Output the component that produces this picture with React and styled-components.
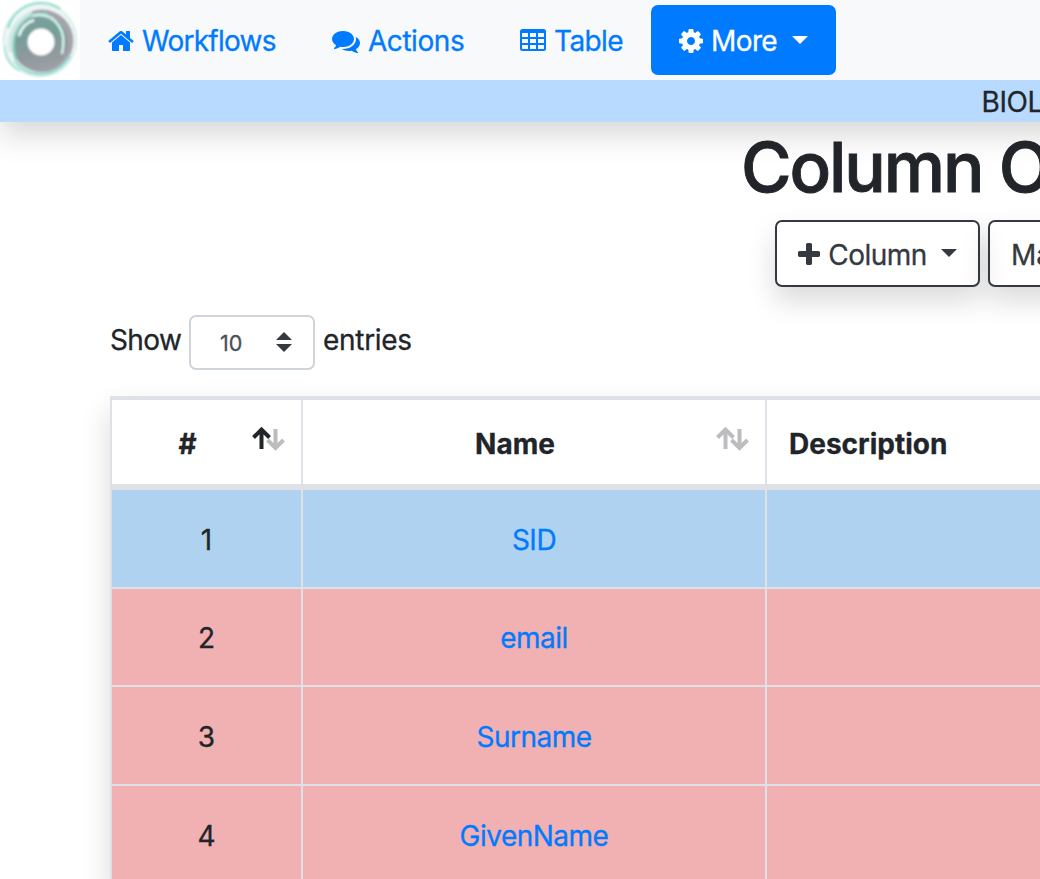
import React from 'react';
import styled, { createGlobalStyle } from 'styled-components';

const Global = createGlobalStyle`
  *, *::before, *::after { box-sizing: border-box; }
  html, body { margin: 0; padding: 0; overflow: hidden; background: #fff; }
  body {
    font: 400 28px/42px Inter, "Liberation Sans", sans-serif;
    color: #212529;
    -webkit-text-stroke: 0.3px currentColor;
  }
`;

const SHADOW = '0 14px 28px rgba(0, 0, 0, 0.15)';

const Page = styled.div`
  width: 1040px;
  height: 879px;
  overflow: hidden;
`;

const Header = styled.header`
  width: 1400px;
  box-shadow: ${SHADOW};
`;

const Navbar = styled.nav`
  display: flex;
  align-items: center;
  height: 80px;
  background: #f8f9fa;
`;

const Logo = styled.svg`
  display: block;
  flex: none;
  width: 80px;
  height: 80px;
  background: #fff;
`;

const NavItem = styled.a`
  display: flex;
  align-items: center;
  flex: none;
  height: 70px;
  padding: 2px 28px 0;
  border-radius: 7px;
  color: ${(p) => (p.$active ? '#fff' : '#007bff')};
  background: ${(p) => (p.$active ? '#007bff' : 'transparent')};
  white-space: nowrap;
`;

const Label = styled.span`
  display: block;
  width: ${(p) => p.$w}px;
  margin-left: 8px;
  letter-spacing: ${(p) => p.$ls || 0}px;
  white-space: nowrap;
`;

const Glyph = styled.svg`
  display: block;
  flex: none;
  height: 28px;
  width: ${(p) => p.$w}px;
  fill: currentColor;
`;

const Caret = styled.span`
  width: 0;
  height: 0;
  margin: -3px 0 0 ${(p) => p.$gap}px;
  border: solid transparent;
  border-width: 8.4px 8.4px 0;
  border-top-color: currentColor;
`;

const Crumb = styled.div`
  height: 42px;
  padding-left: 981.5px;
  padding-top: 1px;
  background: #b8daff;
  letter-spacing: -0.4px;
  white-space: nowrap;
`;

const Title = styled.h1`
  margin: 3px 0 0;
  padding-left: 741px;
  font-size: 69px;
  line-height: 84px;
  font-weight: 500;
  letter-spacing: -2.1px;
  -webkit-text-stroke: 0.9px currentColor;
  white-space: nowrap;
`;

const Toolbar = styled.div`
  display: flex;
  gap: 8px;
  margin: 11px 0 0 775px;
`;

const Button = styled.button`
  display: flex;
  align-items: center;
  flex: none;
  width: ${(p) => p.$w}px;
  height: 67px;
  padding: 2px 21px 0;
  border: 2px solid #343a40;
  border-radius: 7px;
  background: transparent;
  color: #343a40;
  font: inherit;
  box-shadow: ${SHADOW};
`;

const Length = styled.label`
  display: flex;
  align-items: center;
  height: 55px;
  margin: 28px 0 0 110px;
`;

const LengthText = styled.span`
  width: ${(p) => p.$w}px;
  margin-top: -5px;
  letter-spacing: ${(p) => p.$ls}px;
  white-space: nowrap;
`;

const Select = styled.span`
  display: flex;
  align-items: center;
  justify-content: space-between;
  width: 126px;
  height: 55px;
  margin-right: 8px;
  padding: 0 21px 0 29px;
  border: 2px solid #ced4da;
  border-radius: 7px;
  font-size: 21.5px;
  color: #495057;
`;

const SelectArrows = styled.svg`
  display: block;
  width: 16px;
  height: 20px;
  margin-top: -2px;
  fill: #343a40;
`;

const Grid = styled.div`
  display: grid;
  grid-template-columns: 189px 462px 600px;
  column-gap: 2px;
  width: 1400px;
  margin: 26px 0 0 110px;
  padding: 4px 0 0 2px;
  background: #dee2e6;
  box-shadow: ${SHADOW};
`;

const Cell = styled.div`
  display: flex;
  align-items: center;
  justify-content: center;
  height: ${(p) => p.$h}px;
  margin-bottom: 2px;
  padding-top: 2px;
  background: ${(p) => (p.$key ? '#afd2f0' : '#f1b0b1')};
  color: ${(p) => (p.$link ? '#007bff' : 'inherit')};
  letter-spacing: ${(p) => (p.$link ? -0.5 : 0)}px;
`;

const HeadCell = styled.div`
  display: flex;
  align-items: center;
  height: 84px;
  margin-bottom: 6px;
  padding: 3px 16px 0 22px;
  background: #fff;
  font-weight: 700;
`;

const HeadText = styled.span`
  flex: 1;
  padding-right: ${(p) => (p.$align ? 0 : 10)}px;
  text-align: ${(p) => p.$align || 'center'};
`;

const SortIcon = styled.svg`
  display: block;
  flex: none;
  width: 34px;
  height: 26px;
  margin-top: -9px;
  fill: none;
  stroke-width: 4;
`;

const Home = () => (
  <Glyph $w={26} viewBox="64 0 1664 1792">
    <path d="M1472 992v480q0 26-19 45t-45 19h-384v-384h-256v384h-384q-26 0-45-19t-19-45v-480q0-1 .5-3t.5-3l575-474 575 474q1 2 1 6zm223-69l-62 74q-8 9-21 11h-3q-13 0-21-7l-692-577-692 577q-12 8-24 7-13-2-21-11l-62-74q-8-10-7-23.5t11-21.5l719-599q32-26 76-26t76 26l244 204v-195q0-14 9-23t23-9h192q14 0 23 9t9 23v408l219 182q10 8 11 21.5t-7 23.5z" />
  </Glyph>
);

const Comments = () => (
  <Glyph $w={28} viewBox="0 0 1792 1792">
    <path d="M1408 768q0 139-94 257t-256.5 186.5-353.5 68.5q-86 0-176-16-124 88-278 128-36 9-86 16h-3q-11 0-20.5-8t-11.5-21q-1-3-1-6.5t.5-6.5 2-6l2.5-5 3.5-5.5 4-5 4.5-5 4-4.5q5-6 23-25t26-29.5 22.5-29 25-38.5 20.5-44q-124-72-195-177t-71-224q0-139 94-257t256.5-186.5 353.5-68.5 353.5 68.5 256.5 186.5 94 257zm384 256q0 120-71 224.5t-195 176.5q10 24 20.5 44t25 38.5 22.5 29 26 29.5 23 25q1 1 4 4.5t4.5 5 4 5 3.5 5.5l2.5 5 2 6 .5 6.5-1 6.5q-3 14-13 22t-22 7q-50-7-86-16-154-40-278-128-90 16-176 16-271 0-472-132 58 4 88 4 161 0 309-45t264-129q125-92 192-212t67-254q0-77-23-152 129 71 204 178t75 230z" />
  </Glyph>
);

const TableGlyph = () => (
  <Glyph $w={26} viewBox="0 1 26 28">
    <path
      fillRule="evenodd"
      d="M2.500 3h21A2.500 2.500 0 0 1 26 5.500v17a2.500 2.500 0 0 1-2.500 2.500h-21A2.500 2.500 0 0 1 0 22.500v-17A2.500 2.500 0 0 1 2.500 3z
      M2.500 7L2 7.500V11h6V7zM10 7v4h6v-4zM18 7v4h6V7.500L23.500 7z
      M2 13v4h6v-4zM10 13v4h6v-4zM18 13v4h6v-4z
      M2 19v3.500l.5.500h5.500v-4zM10 19v4h6v-4zM18 19v4h5.500l.5-.5v-3.500z"
    />
  </Glyph>
);

const Cog = () => (
  <Glyph $w={24} viewBox="128 0 1536 1792">
    <path d="M1152 896q0-106-75-181t-181-75-181 75-75 181 75 181 181 75 181-75 75-181zm512-109v222q0 12-8 23t-20 13l-185 28q-19 54-39 91 35 50 107 138 10 12 10 25t-9 23q-27 37-99 108t-94 71q-12 0-26-9l-138-108q-44 23-91 38-16 136-29 186-7 28-36 28h-222q-14 0-24.5-8.5t-11.5-21.5l-28-184q-49-16-90-37l-141 107q-10 9-25 9-14 0-25-11-126-114-165-168-7-10-7-23 0-12 8-23 15-21 51-66.5t54-70.500q-27-50-41-99l-183-27q-13-2-21-12.500t-8-23.500v-222q0-12 8-23t19-13l186-28q14-46 39-92-40-57-107-138-10-12-10-24 0-10 9-23 26-36 98.500-107.500t94.500-71.500q13 0 26 10l138 107q44-23 91-38 16-136 29-186 7-28 36-28h222q14 0 24.500 8.500t11.500 21.500l28 184q49 16 90 37l142-107q9-9 24-9 13 0 25 10 129 119 165 170 7 8 7 22 0 12-8 23-15 21-51 66.500t-54 70.500q26 50 41 98l183 28q13 2 21 12.500t8 23.500z" />
  </Glyph>
);

const Plus = () => (
  <Glyph $w={22} viewBox="192 0 1408 1792">
    <path d="M1600 736v192q0 40-28 68t-68 28h-416v416q0 40-28 68t-68 28h-192q-40 0-68-28t-28-68v-416h-416q-40 0-68-28t-28-68v-192q0-40 28-68t68-28h416v-416q0-40 28-68t68-28h192q40 0 68 28t28 68v416h416q40 0 68 28t28 68z" />
  </Glyph>
);

const Sort = ({ asc }) => (
  <SortIcon viewBox="0 0 34 26">
    <path d="M24.500 3v19M16.500 14l8 8 8-8" stroke="#bcbdbe" />
    <path d="M10.500 23V4M2.500 11.500l8-8 8 8" stroke={asc ? '#212529' : '#bcbdbe'} />
  </SortIcon>
);

const Swirl = () => (
  <Logo viewBox="0 0 80 80">
    <defs>
      <linearGradient id="ring" x1="0.1" y1="0" x2="0.3" y2="1">
        <stop offset="0" stopColor="#7fa39e" />
        <stop offset="0.4" stopColor="#749f99" />
        <stop offset="0.75" stopColor="#8f999d" />
        <stop offset="1" stopColor="#9b9fa5" />
      </linearGradient>
      <filter id="soft" x="-10%" y="-10%" width="120%" height="120%">
        <feGaussianBlur stdDeviation="0.8" />
      </filter>
    </defs>
    <g fill="none" filter="url(#soft)">
      <circle cx="40" cy="40" r="36.500" fill="#eef6f5" stroke="#cdece6" strokeWidth="1.500" />
      <circle cx="42" cy="41" r="31.500" fill="#a5a3ab" />
      <circle cx="40" cy="43" r="28" fill="url(#ring)" />
      <path d="M8 28A34 34 0 0 1 60 9" stroke="#93dccd" strokeWidth="2.500" />
      <path d="M5 46Q4 62 20 71" stroke="#a8e2d7" strokeWidth="2" />
      <path d="M10 52Q6 24 32 12" stroke="#c9ece5" strokeWidth="2.500" />
      <path d="M12 50Q9 26 31 15" stroke="#e4e5e8" strokeWidth="2" />
      <path d="M16 60Q9 38 22 23Q32 12 48 14" stroke="#85d2c3" strokeWidth="2.500" />
      <path d="M32 16Q50 12 59 26Q66 36 62 54" stroke="#d5f3ed" strokeWidth="2.500" />
      <path d="M19 36Q22 24 34 20" stroke="#eefaf7" strokeWidth="2.500" />
      <path d="M15 61Q25 75 44 74Q60 72 70 56" stroke="#95dccf" strokeWidth="2.500" />
      <circle cx="41" cy="42" r="13.500" fill="#fff" />
    </g>
  </Logo>
);

const ROWS = [
  { n: 1, name: 'SID', h: 97, isKey: true },
  { n: 2, name: 'email', h: 96 },
  { n: 3, name: 'Surname', h: 97 },
  { n: 4, name: 'GivenName', h: 97 },
];

export default function App() {
  return (
    <Page>
      <Global />
      <Header>
        <Navbar>
          <Swirl />
          <NavItem><Home /><Label $w={134} $ls={-0.75}>Workflows</Label></NavItem>
          <NavItem><Comments /><Label $w={96} $ls={-0.45}>Actions</Label></NavItem>
          <NavItem><TableGlyph /><Label $w={69} $ls={-0.6}>Table</Label></NavItem>
          <NavItem $active><Cog /><Label $w={66} $ls={-0.6}>More</Label><Caret $gap={15} /></NavItem>
        </Navbar>
        <Crumb>BIOL</Crumb>
      </Header>
      <Title>Column O</Title>
      <Toolbar>
        <Button $w={205}><Plus /><Label $w={99} $ls={-0.5}>Column</Label><Caret $gap={14} /></Button>
        <Button $w={300}><span>Ma</span></Button>
      </Toolbar>
      <Length>
        <LengthText $w={79} $ls={-0.6}>Show</LengthText>
        <Select>
          10
          <SelectArrows viewBox="0 0 16 20">
            <path d="M8 0l8 8H0zM0 12h16l-8 8z" />
          </SelectArrows>
        </Select>
        <LengthText $w={90} $ls={-0.3}>entries</LengthText>
      </Length>
      <Grid>
        <HeadCell><HeadText>#</HeadText><Sort asc /></HeadCell>
        <HeadCell><HeadText>Name</HeadText><Sort /></HeadCell>
        <HeadCell><HeadText $align="left">Description</HeadText></HeadCell>
        {ROWS.map((r) => (
          <React.Fragment key={r.n}>
            <Cell $h={r.h} $key={r.isKey}>{r.n}</Cell>
            <Cell $h={r.h} $key={r.isKey} $link>{r.name}</Cell>
            <Cell $h={r.h} $key={r.isKey} />
          </React.Fragment>
        ))}
      </Grid>
    </Page>
  );
}
